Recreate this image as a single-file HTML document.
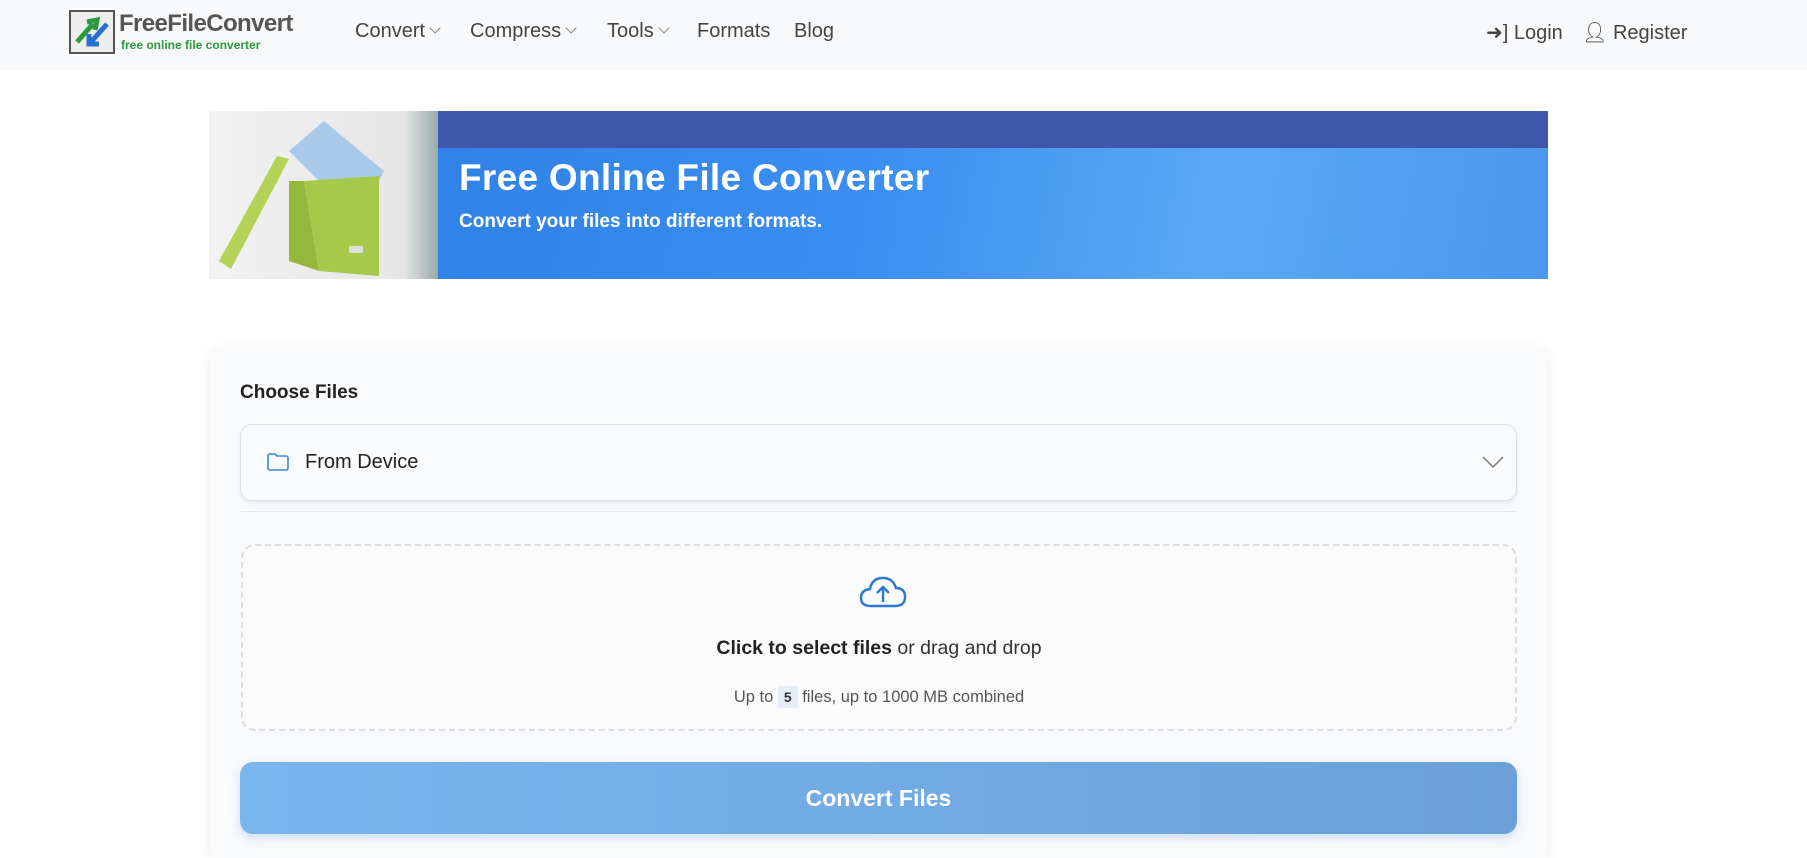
<!DOCTYPE html>
<html style="overflow:hidden;height:858px"><head><meta charset="utf-8"><style>
*{box-sizing:border-box;margin:0;padding:0}
body{width:1807px;height:858px;overflow:hidden;background:#fff;font-family:"Liberation Sans",sans-serif;color:#222;position:relative}
.nav{position:absolute;left:0;top:0;width:1807px;height:71px;background:#f8f9fa}
.nav a{position:absolute;top:20px;font-size:20px;color:#444;text-decoration:none}
.chev{display:inline-block;width:8px;height:8px;border-right:1.3px solid #888;border-bottom:1.3px solid #888;transform:rotate(45deg);margin-left:6px;position:relative;top:-5px}
.banner{position:absolute;left:209px;top:111px;width:1339px;height:168px;background:linear-gradient(100deg,#2a7ce0 0%,#3b8ff0 50%,#5aa8f5 75%,#4a97ee 100%)}
.band{position:absolute;left:229px;top:0;right:0;height:37px;background:#3f57a8}
.img{position:absolute;left:0;top:0;width:229px;height:168px;background:linear-gradient(90deg,#f2f2f2,#e6e6e6 85%,#9aa 100%)}
.card{position:absolute;left:210px;top:348px;width:1338px;height:510px;background:#f9fafb;border-radius:10px 10px 0 0;box-shadow:0 2px 12px rgba(0,0,0,.08)}
</style></head><body>
<div class="nav">
 <svg style="position:absolute;left:69px;top:10px" width="46" height="44"><rect x="1" y="1" width="44" height="42" fill="#eee" stroke="#555" stroke-width="2"/><path d="M8 32 L24 14 M18 12 L28 10 L26 20" stroke="#2a9a3a" stroke-width="5" fill="none"/><path d="M38 14 L22 32 M20 24 L20 34 L30 34" stroke="#2a6fd0" stroke-width="5" fill="none"/></svg>
 <div style="position:absolute;left:119px;top:10px;font-size:24px;font-weight:bold;color:#555;letter-spacing:-0.6px">FreeFileConvert</div>
 <div style="position:absolute;left:121px;top:38px;font-size:12px;font-weight:bold;color:#2a9a3a">free online file converter</div>
 <a style="left:355px">Convert<span class="chev"></span></a>
 <a style="left:470px">Compress<span class="chev"></span></a>
 <a style="left:607px">Tools<span class="chev"></span></a>
 <a style="left:697px">Formats</a>
 <a style="left:794px">Blog</a>
 <a style="left:1486px">➜] Login</a>
 <a style="left:1582px">👤︎ Register</a>
</div>
<div class="banner">
 <div class="img"><svg width="229" height="168"><polygon points="80,40 115,10 175,60 150,110" fill="#a8c9ea"/><polygon points="95,70 170,65 170,165 110,160" fill="#a6c94a"/><polygon points="95,70 80,70 80,150 110,160" fill="#94b83c"/><polygon points="68,45 80,48 22,158 10,150" fill="#b3d256"/><rect x="140" y="135" width="14" height="7" fill="#ddd"/></svg></div>
 <div class="band"></div>
 <div style="position:absolute;left:250px;top:46px;font-size:37px;font-weight:bold;color:#fff;letter-spacing:0.3px">Free Online File Converter</div>
 <div style="position:absolute;left:250px;top:100px;font-size:19px;font-weight:bold;color:#fff">Convert your files into different formats.</div>
</div>
<div class="card">
 <div style="position:absolute;left:30px;top:34px;font-size:19px;font-weight:bold;color:#222">Choose Files</div>
 <div style="position:absolute;left:30px;top:76px;width:1277px;height:77px;border:1px solid #dde1e6;border-radius:12px;background:#fafbfc;box-shadow:0 2px 3px rgba(0,0,0,.08)">
  <svg style="position:absolute;left:26px;top:28px" width="22" height="18"><path d="M1 3 Q1 1 3 1 H8 L10 3 H19 Q21 3 21 5 V15 Q21 17 19 17 H3 Q1 17 1 15 Z" fill="none" stroke="#3a86d8" stroke-width="1.6"/></svg>
  <div style="position:absolute;left:64px;top:26px;font-size:20px;color:#222">From Device</div>
  <svg style="position:absolute;left:1240px;top:30px" width="24" height="14"><path d="M2 2 L12 12 L22 2" fill="none" stroke="#777" stroke-width="1.5"/></svg>
 </div>
 <div style="position:absolute;left:30px;top:163px;width:1277px;height:1px;background:#e6e8eb"></div>
 <div style="position:absolute;left:31px;top:196px;width:1276px;height:187px;border:2px dashed #dadde1;border-radius:14px;background:#fbfbfc">
  <svg style="position:absolute;left:616px;top:30px" width="48" height="34"><path d="M12 30 H36 Q46 30 46 21 Q46 12 37 12 Q34 2 24 2 Q13 2 11 13 Q2 14 2 22 Q2 30 12 30 Z" fill="none" stroke="#2a78d0" stroke-width="2.4"/><path d="M24 26 V11 M18 17 L24 11 L30 17" fill="none" stroke="#2a78d0" stroke-width="2.4"/></svg>
  <div style="position:absolute;left:0;right:0;top:91px;text-align:center;font-size:19.5px;color:#333"><b style="color:#222">Click to select files</b> or drag and drop</div>
  <div style="position:absolute;left:0;right:0;top:142px;text-align:center;font-size:16.5px;color:#555">Up to <span style="background:#e8eef8;padding:3px 6px;font-weight:bold;font-size:14px;color:#333">5</span> files, up to 1000 MB combined</div>
 </div>
 <div style="position:absolute;left:30px;top:414px;width:1277px;height:72px;border-radius:13px;background:linear-gradient(90deg,#79b6ef,#6c9fd8);box-shadow:0 4px 10px rgba(80,140,210,.25);color:#fff;font-size:23px;font-weight:bold;text-align:center;line-height:72px">Convert Files</div>
</div>
</body></html>
